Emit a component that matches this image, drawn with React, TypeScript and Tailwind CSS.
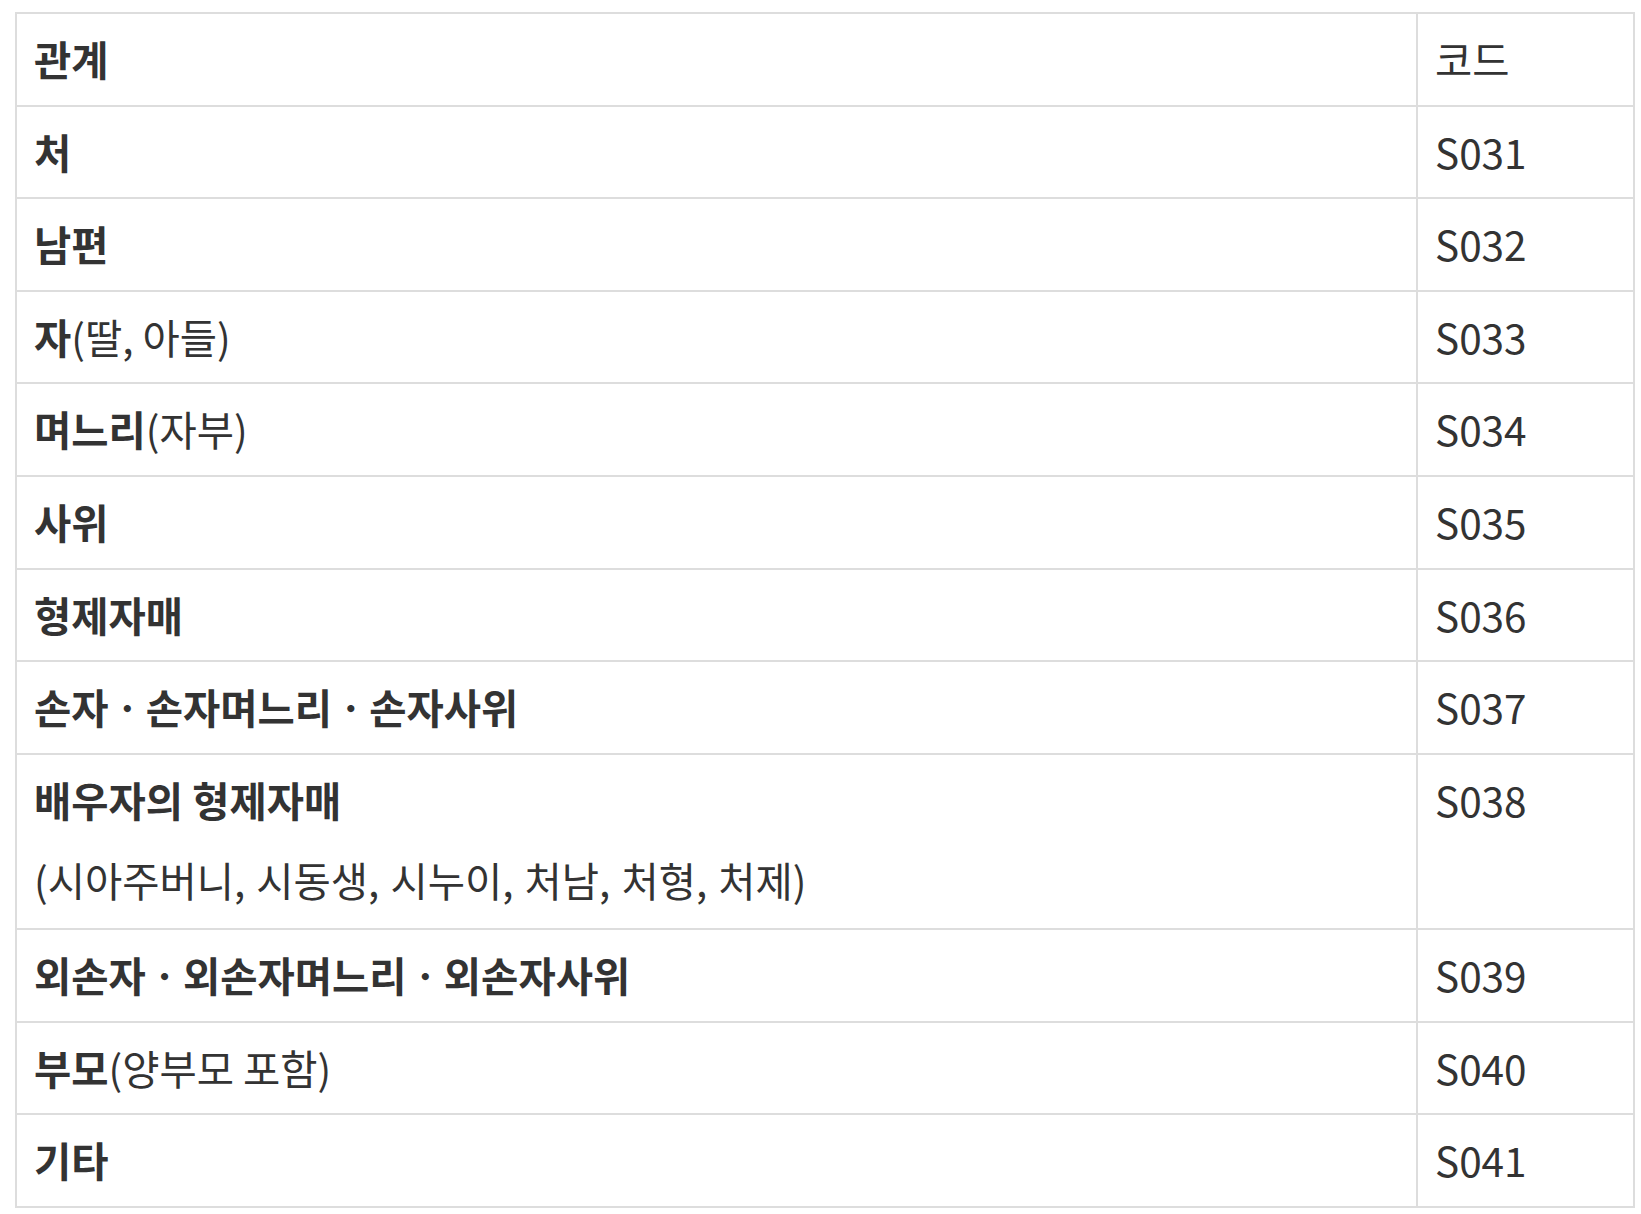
import type { ReactNode } from 'react';

type Row = { label: ReactNode; code: string; extra?: string };

const rows: Row[] = [
  { label: <b className="font-bold">처</b>, code: 'S031' },
  { label: <b className="font-bold">남편</b>, code: 'S032' },
  {
    label: (
      <>
        <b className="font-bold">자</b>(딸, 아들)
      </>
    ),
    code: 'S033',
  },
  {
    label: (
      <>
        <b className="font-bold">며느리</b>(자부)
      </>
    ),
    code: 'S034',
  },
  { label: <b className="font-bold">사위</b>, code: 'S035' },
  { label: <b className="font-bold">형제자매</b>, code: 'S036' },
  { label: <b className="font-bold">손자ㆍ손자며느리ㆍ손자사위</b>, code: 'S037' },
  {
    label: <b className="font-bold">배우자의 형제자매</b>,
    extra: '(시아주버니, 시동생, 시누이, 처남, 처형, 처제)',
    code: 'S038',
  },
  { label: <b className="font-bold">외손자ㆍ외손자며느리ㆍ외손자사위</b>, code: 'S039' },
  {
    label: (
      <>
        <b className="font-bold">부모</b>(양부모 포함)
      </>
    ),
    code: 'S040',
  },
  { label: <b className="font-bold">기타</b>, code: 'S041' },
];

const cell = 'border-r-2 border-b-2 border-[#dddddd] pt-[17px] px-[17px]';

export default function App() {
  return (
    <div
      className="min-h-screen bg-white pt-[12px] pl-[15px] text-[#333333] text-[40.5px] leading-[56.6px]"
      style={{ fontFamily: '"Noto Sans CJK KR", "Noto Sans", sans-serif' }}
    >
      <div className="w-[1620px] grid grid-cols-[1401px_217px] border-l-2 border-t-2 border-[#dddddd]">
        <div className={`${cell} pb-[17px] font-bold`}>관계</div>
        <div className={`${cell} pb-[17px]`}>코드</div>

        {rows.map((r) => (
          <div key={r.code} className="contents">
            <div className={`${cell} ${r.extra ? 'pb-[19.6px]' : 'pb-[17px]'}`}>
              <div>{r.label}</div>
              {r.extra && <div className="mt-[23.4px] [word-spacing:2px]">{r.extra}</div>}
            </div>
            <div className={`${cell} pb-[17px]`}>{r.code}</div>
          </div>
        ))}
      </div>
    </div>
  );
}
